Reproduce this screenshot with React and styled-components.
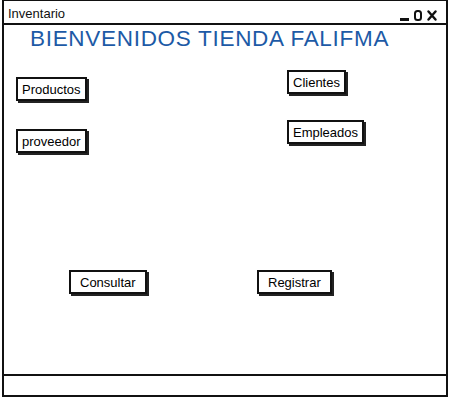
import React from "react";
import styled, { createGlobalStyle } from "styled-components";

const Global = createGlobalStyle`
  html, body { margin: 0; padding: 0; background: #fff; }
  body { font-family: "Liberation Sans", Arial, sans-serif; }
`;

const Window = styled.div`
  box-sizing: border-box;
  margin-left: 2px;
  width: 446px;
  height: 397px;
  border: 2px solid #111;
  border-top-width: 1px;
  display: flex;
  flex-direction: column;
  background: #fff;
`;

const TitleBar = styled.div`
  height: 24px;
  border-bottom: 2px solid #111;
  display: flex;
  align-items: center;
  justify-content: space-between;
  padding: 3px 9px 0 4px;
  box-sizing: border-box;
`;

const TitleText = styled.span`
  font-size: 13px;
  color: #111;
  line-height: 18px;
`;

const Controls = styled.div`
  display: flex;
  align-items: flex-end;
  gap: 5px;
`;

const Main = styled.div`
  flex: 1;
  display: flex;
  flex-direction: column;
`;

const Heading = styled.h1`
  margin: 1px 0 0 26px;
  font-size: 22.5px;
  line-height: 26px;
  font-weight: normal;
  letter-spacing: 0.7px;
  color: #1d5aa6;
`;

const Columns = styled.div`
  display: flex;
  padding-left: 12px;
`;

const Column = styled.div`
  display: flex;
  flex-direction: column;
  align-items: flex-start;
  width: ${(p) => p.$width || "auto"};
  padding-top: ${(p) => p.$top}px;
  gap: ${(p) => p.$gap}px;
`;

const BottomRow = styled.div`
  display: grid;
  grid-template-columns: 188px auto;
  justify-items: start;
  padding-left: 65px;
  margin-top: 117px;
`;

const Button = styled.button`
  box-sizing: border-box;
  height: 24px;
  padding: 0 ${(p) => (p.$wide ? 9 : 4)}px;
  border: 2px solid #111;
  background: #fff;
  box-shadow: 2px 2px 0 #222;
  font-family: "Liberation Sans", Arial, sans-serif;
  font-size: 13px;
  color: #000;
  display: inline-flex;
  align-items: center;
  cursor: pointer;
`;

const StatusBar = styled.div`
  height: 19px;
  border-top: 2px solid #111;
`;

function WindowControls() {
  return (
    <Controls>
      <svg width="9" height="14" viewBox="0 0 9 14">
        <rect x="0" y="11" width="9" height="3" fill="#111" />
      </svg>
      <svg width="8" height="14" viewBox="0 0 8 14">
        <rect x="1" y="4" width="6" height="9" rx="2.5" fill="none" stroke="#111" strokeWidth="2" />
      </svg>
      <svg width="10" height="14" viewBox="0 0 10 14">
        <path d="M1.5 4.5 L8.5 12.5 M8.5 4.5 L1.5 12.5" stroke="#111" strokeWidth="2.4" strokeLinecap="round" />
      </svg>
    </Controls>
  );
}

export default function App() {
  return (
    <>
      <Global />
      <Window>
        <TitleBar>
          <TitleText>Inventario</TitleText>
          <WindowControls />
        </TitleBar>
        <Main>
          <Heading>BIENVENIDOS TIENDA FALIFMA</Heading>
          <Columns>
            <Column $width="271px" $top={25} $gap={28}>
              <Button>Productos</Button>
              <Button>proveedor</Button>
            </Column>
            <Column $top={18} $gap={26}>
              <Button>Clientes</Button>
              <Button>Empleados</Button>
            </Column>
          </Columns>
          <BottomRow>
            <Button $wide>Consultar</Button>
            <Button $wide>Registrar</Button>
          </BottomRow>
        </Main>
        <StatusBar />
      </Window>
    </>
  );
}
